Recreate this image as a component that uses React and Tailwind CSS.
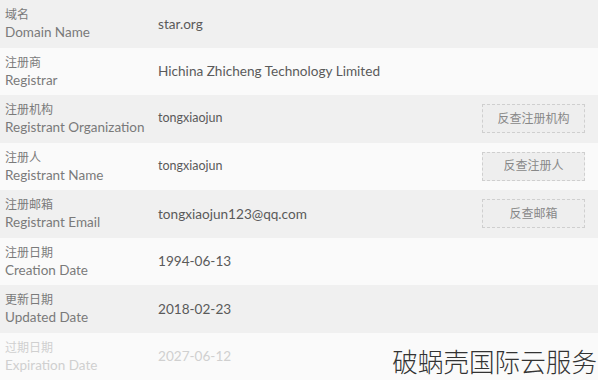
import React from 'react';

const rows = [
  { cn: '域名', en: 'Domain Name', value: 'star.org' },
  { cn: '注册商', en: 'Registrar', value: 'Hichina Zhicheng Technology Limited' },
  { cn: '注册机构', en: 'Registrant Organization', value: 'tongxiaojun', small: true, action: '反查注册机构' },
  { cn: '注册人', en: 'Registrant Name', value: 'tongxiaojun', small: true, action: '反查注册人' },
  { cn: '注册邮箱', en: 'Registrant Email', value: 'tongxiaojun123@qq.com', action: '反查邮箱' },
  { cn: '注册日期', en: 'Creation Date', value: '1994-06-13' },
  { cn: '更新日期', en: 'Updated Date', value: '2018-02-23' },
  { cn: '过期日期', en: 'Expiration Date', value: '2027-06-12', faded: true },
];

function App() {
  return (
    <div className="relative w-[598px] h-[380px] overflow-hidden bg-white font-['Lato','Noto_Sans_CJK_SC',sans-serif]">
      {rows.map((r, i) => (
        <div
          key={r.en}
          className={`flex items-center h-[47.5px] pl-[5px] pr-[13px] ${i % 2 === 0 ? 'bg-[#f0f0f0]' : 'bg-[#fafafa]'}`}
        >
          <div className={`w-[153px] flex flex-col ${r.faded ? 'text-[#d0d0d0]' : 'text-[#7a7a7a]'}`}>
            <span className="text-[12px] leading-[17px]">{r.cn}</span>
            <span className="text-[13.5px] leading-[18px]">{r.en}</span>
          </div>
          <div className={`flex-1 ${r.small ? 'text-[12.5px]' : 'text-[13.6px]'} ${r.faded ? 'text-[#d0d0d0]' : 'text-[#5a5a5a]'}`}>
            {r.value}
          </div>
          {r.action && (
            <button className="w-[103px] h-[29px] border border-dashed border-[#cfcfcf] bg-[#eeeeee] text-[12px] text-[#888]">
              {r.action}
            </button>
          )}
        </div>
      ))}
      <div className="absolute right-[1px] bottom-[6px] text-[25.6px] leading-none text-[#333] font-['Noto_Sans_CJK_SC',sans-serif] font-light">
        破蜗壳国际云服务
      </div>
    </div>
  );
}

export default App;
